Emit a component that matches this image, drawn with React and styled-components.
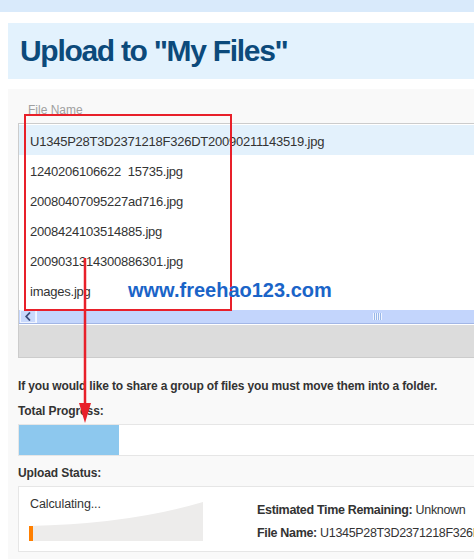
import React from "react";
import styled, { createGlobalStyle } from "styled-components";

const GlobalStyle = createGlobalStyle`
  html, body { margin: 0; padding: 0; overflow: hidden; background: #fff; }
  body { font-family: "Liberation Sans", Arial, sans-serif; color: #333; }
  * { box-sizing: border-box; }
`;

const Page = styled.div`
  position: relative;
  width: 660px;
  height: 559px;
`;

const TopBand = styled.div`
  height: 12px;
  background: #d9eafb;
`;

const Header = styled.div`
  margin: 11px 0 10px 8px;
  height: 56px;
  background: #e3f2fd;
  display: flex;
  align-items: center;
  padding-left: 12px;
`;

const Title = styled.h1`
  margin: 0;
  font-size: 30px;
  font-weight: bold;
  color: #0c4a7b;
  letter-spacing: -1.3px;
`;

const Panel = styled.div`
  margin-left: 8px;
  background: #f9f9f9;
  padding: 14px 0 7px 10px;
  height: 470px;
`;

const ColLabel = styled.div`
  font-size: 12px;
  line-height: 14px;
  color: #a0a0a0;
  padding-left: 10px;
  margin-bottom: 6px;
`;

const ListBox = styled.div`
  border: 1px solid #ccc;
  background: #fff;
`;

const Rows = styled.div`
  padding: 1px 0 5px;
`;

const Row = styled.div`
  height: 30px;
  display: flex;
  align-items: center;
  padding: 2px 0 0 11px;
  font-size: 13px;
  letter-spacing: -0.23px;
  color: #333;
  white-space: nowrap;
  background: ${(p) => (p.$active ? "#e3f1fc" : "#fff")};
`;

const ScrollBar = styled.div`
  height: 14px;
  display: flex;
  background: #c3d5fc;
  border-bottom: 1px solid #a2b6e6;
`;

const ScrollBtn = styled.div`
  width: 16px;
  margin-left: 1px;
  border: 1px solid #eef3ff;
  background: #c9d9fc;
  display: flex;
  align-items: center;
  justify-content: center;
`;

const Thumb = styled.div`
  flex: 1;
  border-left: 1px solid #f2f6ff;
  display: flex;
  align-items: center;
  padding-left: 336px;
`;

const Grip = styled.div`
  width: 9px;
  height: 7px;
  background: repeating-linear-gradient(90deg, #eef4ff 0 1px, #9ab8e8 1px 2px);
`;

const GrayArea = styled.div`
  height: 33px;
  background: #dcdcdc;
  border-top: 1px solid #fff;
`;

const Para = styled.div`
  margin-top: 21px;
  font-size: 12px;
  line-height: 15px;
  font-weight: bold;
  letter-spacing: -0.15px;
  color: #333;
`;

const SectionLabel = styled.div`
  margin-top: ${(p) => p.$mt || 10}px;
  font-size: 12px;
  line-height: 15px;
  font-weight: bold;
  letter-spacing: -0.1px;
  color: #333;
  margin-bottom: 5px;
`;

const ProgressBox = styled.div`
  height: 32px;
  border: 1px solid #e6e6e6;
  background: #fff;
`;

const ProgressFill = styled.div`
  height: 100%;
  background: #8dc8ee;
`;

const StatusBox = styled.div`
  height: 66px;
  border: 1px solid #e6e6e6;
  background: #fff;
  padding: 10px 0 10px 10px;
  display: flex;
  gap: 54px;
`;

const GraphCell = styled.div`
  display: grid;
  width: 174px;
  flex-shrink: 0;
`;

const Calc = styled.div`
  grid-area: 1 / 1;
  align-self: start;
  padding-left: 1px;
  font-size: 12.5px;
  line-height: 15px;
  letter-spacing: -0.1px;
  color: #333;
  position: relative;
  z-index: 1;
`;

const Graph = styled.svg`
  grid-area: 1 / 1;
  align-self: end;
  display: block;
`;

const Details = styled.div`
  padding-top: 6px;
  display: flex;
  flex-direction: column;
  gap: 8px;
`;

const Detail = styled.div`
  font-size: 12.5px;
  line-height: 15px;
  letter-spacing: -0.33px;
  color: #333;
  white-space: nowrap;
  b { font-weight: bold; }
`;

const RedBox = styled.div`
  position: absolute;
  left: 24px;
  top: 114px;
  width: 208px;
  height: 197px;
  border: 2px solid #e8202a;
  pointer-events: none;
`;

const Arrow = styled.svg`
  position: absolute;
  left: 77px;
  top: 256px;
`;

const Watermark = styled.div`
  position: absolute;
  left: 128px;
  top: 280px;
  font-size: 20px;
  line-height: 20px;
  font-weight: bold;
  color: #1a64c8;
`;

const files = [
  "U1345P28T3D2371218F326DT20090211143519.jpg",
  "1240206106622  15735.jpg",
  "20080407095227ad716.jpg",
  "2008424103514885.jpg",
  "20090313143008863" + "01.jpg",
  "images.jpg",
];

export default function App() {
  return (
    <Page>
      <GlobalStyle />
      <TopBand />
      <Header>
        <Title>Upload to "My Files"</Title>
      </Header>
      <Panel>
        <ColLabel>File Name</ColLabel>
        <ListBox>
          <Rows>
            {files.map((f, i) => (
              <Row key={i} $active={i === 0}>
                {f.replace(/ /g, "\u00a0")}
              </Row>
            ))}
          </Rows>
          <ScrollBar>
            <ScrollBtn>
              <svg width="6" height="9" viewBox="0 0 6 9">
                <path d="M5 0.5 L1.2 4.5 L5 8.5" fill="none" stroke="#3b4c7a" strokeWidth="1.8" />
              </svg>
            </ScrollBtn>
            <Thumb>
              <Grip />
            </Thumb>
          </ScrollBar>
          <GrayArea />
        </ListBox>
        <Para>If you would like to share a group of files you must move them into a folder.</Para>
        <SectionLabel $mt={10}>Total Progress:</SectionLabel>
        <ProgressBox>
          <ProgressFill style={{ width: "100px" }} />
        </ProgressBox>
        <SectionLabel $mt={10}>Upload Status:</SectionLabel>
        <StatusBox>
          <GraphCell>
            <Calc>Calculating...</Calc>
            <Graph width="174" height="39" viewBox="0 0 174 39">
              <path d="M0 39 L0 24 Q100 22 174 0 L174 39 Z" fill="#edeceb" />
              <rect x="0" y="24" width="4" height="15" fill="#ff7f00" />
            </Graph>
          </GraphCell>
          <Details>
            <Detail>
              <b>Estimated Time Remaining:</b> Unknown
            </Detail>
            <Detail>
              <b>File Name:</b> U1345P28T3D2371218F326DT20090211143519.jpg
            </Detail>
          </Details>
        </StatusBox>
      </Panel>
      <RedBox />
      <Arrow width="16" height="170" viewBox="0 0 16 170">
        <line x1="8" y1="2" x2="8" y2="152" stroke="#e8202a" strokeWidth="2.5" />
        <polygon points="2,147 14,147 8,167" fill="#e8202a" />
      </Arrow>
      <Watermark>www.freehao123.com</Watermark>
    </Page>
  );
}
